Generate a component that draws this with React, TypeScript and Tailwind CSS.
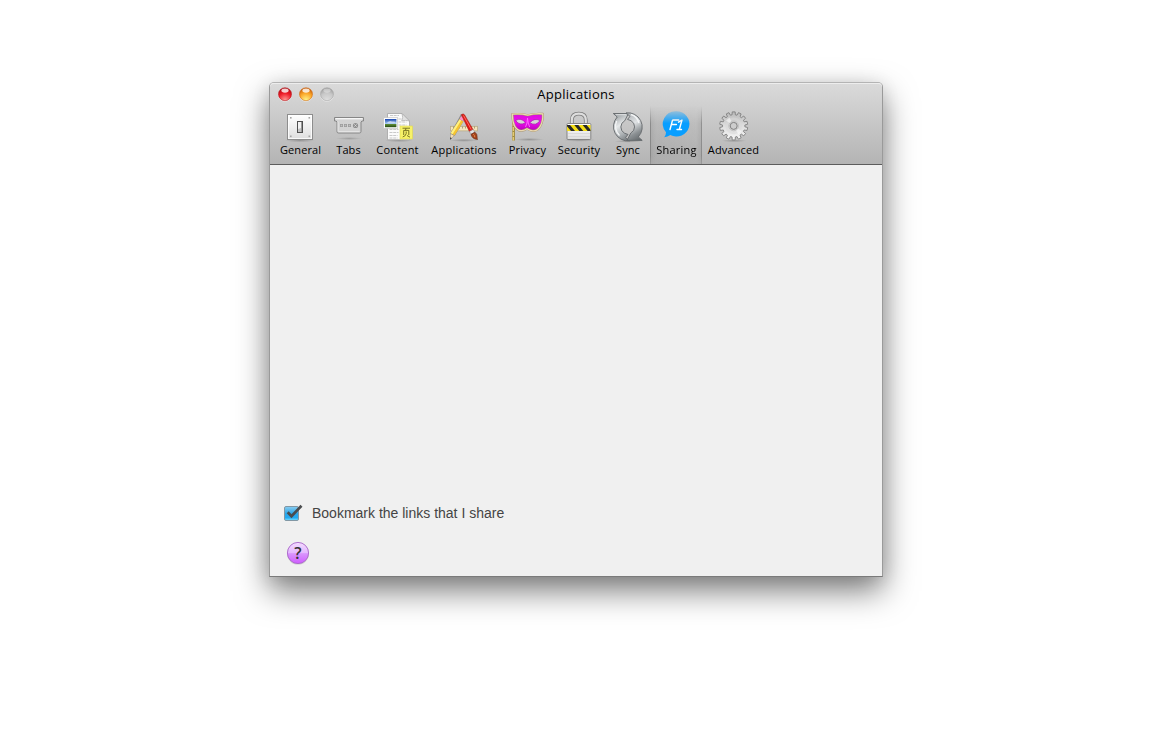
import type { ReactNode } from "react";

const polar = (cx: number, cy: number, r: number, deg: number) => {
  const a = (deg * Math.PI) / 180;
  return `${(cx + r * Math.cos(a)).toFixed(2)},${(cy + r * Math.sin(a)).toFixed(2)}`;
};

const gearPoints = Array.from({ length: 14 }, (_, i) => {
  const c = i * (360 / 14) - 90;
  return [
    polar(31.7, 16.9, 11.2, c - 8.5),
    polar(31.7, 16.9, 14.1, c - 6),
    polar(31.7, 16.9, 14.1, c + 6),
    polar(31.7, 16.9, 11.2, c + 8.5),
  ].join(" ");
}).join(" ");

function Gradients() {
  return (
    <svg width="0" height="0" className="absolute">
      <defs>
        <linearGradient id="plate" x1="0" y1="0" x2="0" y2="1">
          <stop offset="0" stopColor="#fff" />
          <stop offset="1" stopColor="#dedede" />
        </linearGradient>
        <linearGradient id="sky" x1="0" y1="0" x2="0" y2="1">
          <stop offset="0" stopColor="#1745b0" />
          <stop offset=".55" stopColor="#a5c9ee" />
          <stop offset=".65" stopColor="#5c8a34" />
          <stop offset="1" stopColor="#254a14" />
        </linearGradient>
        <linearGradient id="mask" x1="0" y1="0" x2="0" y2="1">
          <stop offset="0" stopColor="#d80fdc" />
          <stop offset=".5" stopColor="#f00cee" />
          <stop offset="1" stopColor="#b400b8" />
        </linearGradient>
        <linearGradient id="steel" gradientUnits="userSpaceOnUse" x1="8" y1="5" x2="24" y2="32">
          <stop offset="0" stopColor="#8d9295" />
          <stop offset=".4" stopColor="#e6e9ea" />
          <stop offset=".7" stopColor="#a9aeb1" />
          <stop offset="1" stopColor="#666b6e" />
        </linearGradient>
        <linearGradient id="steelDark" gradientUnits="userSpaceOnUse" x1="20" y1="4" x2="36" y2="32">
          <stop offset="0" stopColor="#a9adb0" />
          <stop offset=".4" stopColor="#dfe2e4" />
          <stop offset=".7" stopColor="#8b9093" />
          <stop offset="1" stopColor="#5b6063" />
        </linearGradient>
        <linearGradient id="gear" x1="0" y1="0" x2="0" y2="1">
          <stop offset="0" stopColor="#b8b8b8" />
          <stop offset=".5" stopColor="#dedede" />
          <stop offset="1" stopColor="#f6f6f6" />
        </linearGradient>
        <radialGradient id="ground">
          <stop offset="0" stopColor="#000" stopOpacity=".22" />
          <stop offset="1" stopColor="#000" stopOpacity="0" />
        </radialGradient>
        <clipPath id="lockBand">
          <rect x="15" y="16" width="23.500" height="6" />
        </clipPath>
      </defs>
    </svg>
  );
}

const GeneralIcon = () => (
  <>
    <ellipse cx="26" cy="31.500" rx="15" ry="1.800" fill="url(#ground)" />
    <rect x="13.500" y="5.500" width="25" height="25" fill="url(#plate)" stroke="#8d8d8d" />
    <rect x="14.500" y="6.500" width="23" height="23" fill="none" stroke="#fff" strokeOpacity=".8" />
    <g fill="#a5a5a5">
      <rect x="16" y="8" width="1.600" height="1.600" />
      <rect x="34.500" y="8" width="1.600" height="1.600" />
      <rect x="16" y="26.500" width="1.600" height="1.600" />
      <rect x="34.500" y="26.500" width="1.600" height="1.600" />
    </g>
    <rect x="23.500" y="12.500" width="5" height="11" fill="#f2f2f2" stroke="#4f4f4f" />
    <path d="M24 20l3-1v4h-3z" fill="#c5c5c5" />
    <path d="M27.500 13v10" stroke="#999" />
  </>
);

const TabsIcon = () => (
  <>
    <ellipse cx="22" cy="29.500" rx="13" ry="1.500" fill="url(#ground)" opacity=".8" />
    <path
      d="M7.500 8.500h29v3.500h-1.500l-1 1v9.500q0 1.500-1.500 1.500h-21q-1.500 0-1.500-1.500v-9.500l-1-1h-1.500z"
      fill="#d2d2d2"
      stroke="#868686"
    />
    <path d="M8.500 9.700h27" stroke="#f8f8f8" strokeWidth="1.300" />
    <path d="M11 12.500v10M11.500 22.700h21" stroke="#eee" strokeWidth=".8" />
    <g fill="#c0c0c0" stroke="#9c9c9c" strokeWidth=".8">
      <rect x="13.400" y="15.400" width="2.200" height="2.200" />
      <rect x="17.400" y="15.400" width="2.200" height="2.200" />
      <rect x="21.400" y="15.400" width="2.200" height="2.200" />
    </g>
    <circle cx="28.500" cy="16.500" r="2.600" fill="#8f8f8f" />
    <path d="M27.300 15.300l2.400 2.400M29.700 15.300l-2.400 2.400" stroke="#ddd" strokeWidth=".8" />
  </>
);

const ContentIcon = () => (
  <>
    <ellipse cx="29" cy="31.500" rx="14" ry="1.600" fill="url(#ground)" />
    <path d="M17.500 4.500h14.500l7.500 7.500v18.800h-22z" fill="#fbfbfb" stroke="#aaa" strokeWidth=".9" />
    <path d="M32 4.500q1.500 4.500-.3 7.300 4-1 7.800.2z" fill="#e2e2e2" stroke="#aaa" strokeWidth=".7" />
    <path
      d="M20 6.500h9M28.500 10h3M28.500 13h8M28.500 16h8M19.500 20.500h9M19.500 23.500h9M19.500 26.500h8M19.500 29h8"
      stroke="#c9c9c9"
      strokeDasharray="3 .7"
    />
    <rect x="13.700" y="8.700" width="14" height="10.800" fill="#fff" stroke="#c4c4c4" strokeWidth=".7" />
    <rect x="15" y="10" width="11.400" height="8.200" fill="url(#sky)" />
    <path d="M17 13.500q3-2.500 5-1 3-.5 4 1-2 1-4 .7-3 .5-5-.7" fill="#fff" opacity=".55" />
    <rect x="30" y="17" width="12.500" height="13" fill="#f7f268" stroke="#e0d84e" strokeWidth=".6" />
    <path
      d="M32.500 19.200h7.500M36 19.200l-.5 2M33.700 26v-4.600h5.100v4.600M36.200 22.500v2q-.3 2.500-3.500 3.500M37 26.500l3 1.700"
      fill="none"
      stroke="#6d681b"
      strokeWidth=".9"
    />
  </>
);

const ApplicationsIcon = () => (
  <>
    <ellipse cx="39" cy="31.300" rx="15" ry="1.600" fill="url(#ground)" />
    <rect x="25.500" y="17.300" width="27" height="4.600" fill="#f3e4bc" stroke="#b3a67f" strokeWidth=".7" />
    <path d="M28.500 17.500v2M31.500 17.500v2M34.500 17.500v2M37.500 17.500v2M40.500 17.500v2M43.500 17.500v2M46.500 17.500v2M49.500 17.500v2" stroke="#8d8263" strokeWidth=".7" />
    <path d="M36 4.900l3.600 1.700-1 5.400L30.300 26l-5.300 4.800.4-6.600 8.300-14.700z" fill="#8a8a8a" />
    <path d="M34.600 10.200l3.800 2.200-8.800 14-3.800-2.400z" fill="#f5c431" />
    <path d="M34.600 10.200l1.700 1-8.800 14-1.700-1.200z" fill="#fff281" />
    <path d="M35.600 7.900q2-1.700 3.800 1l-1.200 3.200-3.500-1.900z" fill="#ff93c8" />
    <path d="M25.800 25l3.200 1.800-3.600 3.100z" fill="#f6dfb4" />
    <path d="M25.300 28.300l1.500.9-1.800 1.600z" fill="#333" />
    <path d="M36.400 5.700q1.900-1.700 3.200.2l8.600 15-3.600 2z" fill="#e21713" stroke="#a5231f" strokeWidth=".6" />
    <path d="M38.500 6.500l7.800 14" stroke="#ff786a" strokeWidth=".9" />
    <path d="M44.400 22.500l3.800-2.100 1.600 2.800-3.700 2z" fill="#e4e4e4" stroke="#888" strokeWidth=".5" />
    <path d="M46 25.300l3.900-2.100q2.500 1.700 2.200 4.300-.1 1.800.4 3-5.600-.5-6.500-5.200z" fill="#a6431b" stroke="#632611" strokeWidth=".6" />
    <path d="M48.300 25.200q1.500 1 1.500 3" stroke="#e08b52" fill="none" />
  </>
);

const maskOutline =
  "M9.400 5.200q8.300-.8 15.300 1 8-2 15-1.300.6 6.500-2.100 11.700-2.800 5.500-7.700 5.300-2.400 0-5.900-2.200-3.200 2.200-6 2-4-.2-6.400-4.800-2.200-4.500-2.200-11.700z";

const PrivacyIcon = () => (
  <>
    <ellipse cx="26" cy="30.500" rx="15" ry="1.600" fill="url(#ground)" />
    <path d="M10.600 8v23.500" stroke="#a08a3a" strokeWidth="2.600" />
    <path d="M10.300 8v23.500" stroke="#ecd27a" strokeWidth="1.200" strokeDasharray="4 1" />
    <path d={maskOutline} fill="url(#mask)" stroke="#a5946f" strokeWidth="2.100" />
    <path d={maskOutline} fill="none" stroke="#ecd8b0" strokeWidth="1.200" />
    <path d="M22.500 18q2-3.500 2-9 .3 5.500 2.200 9" stroke="#ff6cff" strokeWidth=".9" fill="none" />
    <path d="M12.600 11.500q5.500-3.300 9.900 2.200-5.800 3.600-9.900-2.200zM26.700 13.700q5-5.200 10.300-2.100-4 6-10.300 2.100z" fill="#d6d4d6" stroke="#a518ab" strokeWidth=".7" />
  </>
);

const SecurityIcon = () => (
  <>
    <ellipse cx="27.500" cy="31" rx="16" ry="1.800" fill="url(#ground)" />
    <path d="M19.800 15v-3.800q0-6.500 7-6.500t7 6.500V15" fill="none" stroke="#7c7c7c" strokeWidth="3.800" />
    <path d="M19.800 15v-3.800q0-6.500 7-6.500t7 6.500V15" fill="none" stroke="#dedede" strokeWidth="2.200" />
    <rect x="15" y="14.500" width="23.800" height="16" rx="1" fill="url(#plate)" stroke="#7c7c7c" strokeWidth=".9" />
    <rect x="15" y="16" width="23.500" height="6" fill="#f5df16" />
    <g clipPath="url(#lockBand)" fill="#292927">
      <path d="M14 16h4l5 6h-4zM22.300 16h4l5 6h-4zM30.600 16h4l5 6h-4z" />
    </g>
    <path d="M16 24.500h22M16 27.500h22" stroke="#d2d2d2" strokeWidth=".7" />
  </>
);

const SyncIcon = () => (
  <>
    <ellipse cx="22" cy="32.300" rx="14" ry="1.400" fill="url(#ground)" />
    <path
      d="M7.300 4.500H22.500L18.700 11.800A7 7 0 0 0 18.500 24.200L22 25.500 19.500 28.500 23.500 31.800A14.300 14.300 0 0 1 11.200 8z"
      fill="url(#steel)"
      stroke="#63686b"
      strokeWidth=".9"
      strokeLinejoin="round"
    />
    <path
      d="M36.200 31.400H21L24.800 24A7 7 0 0 0 25 11.700L21.500 10.400 24 7.400 20 3.900A14.300 14.300 0 0 1 32.300 27.900z"
      fill="url(#steelDark)"
      stroke="#63686b"
      strokeWidth=".9"
      strokeLinejoin="round"
    />
    <path d="M10.700 12A12.500 12.500 0 0 0 13.500 26.500M25 5.500Q31 7 33 14" stroke="#f4f6f7" strokeWidth="1.300" fill="none" />
    <path d="M9.500 5.700H20" stroke="#e6e9ea" strokeWidth=".9" />
  </>
);

const SharingIcon = () => (
  <>
    <path d="M26.500 2.200a13 12.700 0 1 1-6.200 23.900Q17.500 28 14.300 28.200q1.700-2 1.700-5A13 12.700 0 0 1 26.500 2.200z" fill="#089eff" />
    <path
      d="M22.500 11.300L20 20.500M23 11h5.700M21.600 15.500h4.800M28.500 13.200l3.500-2.200-2.700 9.500M27 20.500h4.500"
      stroke="#fff"
      strokeWidth="1.400"
      strokeLinecap="round"
      strokeLinejoin="round"
      fill="none"
    />
  </>
);

const AdvancedIcon = () => (
  <>
    <ellipse cx="32" cy="31.800" rx="13" ry="1.300" fill="url(#ground)" />
    <polygon points={gearPoints} fill="url(#gear)" stroke="#808080" strokeWidth=".9" strokeLinejoin="round" />
    <circle cx="31.700" cy="16.900" r="8.300" fill="#d8d8d8" opacity=".5" />
    <path d="M31.700 16.900L24 11.500 27.500 8.500zM31.700 16.900l8 5-3.300 3.500z" fill="#fff" opacity=".5" />
    <circle cx="31.700" cy="16.900" r="4.900" fill="#d6d6d6" stroke="#bcbcbc" strokeWidth=".8" />
    <circle cx="31.700" cy="16.900" r="3.500" fill="#cdcdcd" stroke="#808080" strokeWidth="1" />
  </>
);

type Tool = { label: string; width: number; box: string; text: string; icon: ReactNode; active?: boolean };

const tools: Tool[] = [
  { label: "General", width: 53, box: "w-[53px]", text: "tracking-[0.1px]", icon: <GeneralIcon /> },
  { label: "Tabs", width: 43, box: "w-[43px]", text: "tracking-[0.1px]", icon: <TabsIcon /> },
  { label: "Content", width: 55, box: "w-[55px]", text: "tracking-[0.2px]", icon: <ContentIcon /> },
  { label: "Applications", width: 78, box: "w-[78px]", text: "tracking-[0.22px]", icon: <ApplicationsIcon /> },
  { label: "Privacy", width: 49, box: "w-[49px]", text: "tracking-[0.15px]", icon: <PrivacyIcon /> },
  { label: "Security", width: 54, box: "w-[54px]", text: "tracking-[0.2px]", icon: <SecurityIcon /> },
  { label: "Sync", width: 44, box: "w-[44px]", text: "tracking-[0.1px]", icon: <SyncIcon /> },
  { label: "Sharing", width: 52, box: "w-[52px]", text: "pl-px tracking-[0.25px]", icon: <SharingIcon />, active: true },
  { label: "Advanced", width: 63, box: "w-[63px]", text: "tracking-[0.15px]", icon: <AdvancedIcon /> },
];

function TrafficLight({ tone }: { tone: "red" | "amber" | "off" }) {
  const palette = {
    red: ["#b00d14", "#ee1c28", "#ff9c96"],
    amber: ["#c8600c", "#fba527", "#fff58a"],
    off: ["#a0a0a0", "#c8c8c8", "#dedede"],
  }[tone];
  return (
    <svg width="14" height="15" viewBox="0 0 14 15">
      <defs>
        <radialGradient id={`light-${tone}`} cx=".5" cy=".95" r=".9">
          <stop offset="0" stopColor={palette[2]} />
          <stop offset=".6" stopColor={palette[1]} />
          <stop offset="1" stopColor={palette[0]} />
        </radialGradient>
      </defs>
      <circle cx="7" cy="7.900" r="6.800" fill="#fff" opacity=".5" />
      <circle cx="7" cy="7.200" r="6.500" fill={`url(#light-${tone})`} stroke={palette[0]} strokeOpacity=".65" strokeWidth=".8" />
      <ellipse cx="7" cy="3.600" rx="3.600" ry="2.100" fill="#fff" opacity={tone === "off" ? 0.35 : 0.8} />
    </svg>
  );
}

export default function App() {
  return (
    <div className="flex h-[733px] w-full items-start overflow-hidden bg-white pt-[82px] pl-[269px] font-['Open_Sans','Noto_Sans',sans-serif] text-black">
      <Gradients />
      <main className="flex h-[495px] w-[614px] flex-col rounded-t-[5px] border border-t-[#b4b4b4] border-r-[#9a9a9a] border-b-[#7a7a7a] border-l-[#9a9a9a] bg-[#f0f0f0] shadow-[0_14px_32px_rgba(0,0,0,0.5),0_3px_18px_rgba(0,0,0,0.1)]">
        <header className="flex h-[82px] shrink-0 flex-col rounded-t-[4px] border-t border-b border-t-[#ededed] border-b-[#5c5c5c] bg-linear-to-b from-[#dadada] to-[#b4b4b4]">
          <div className="grid h-[22px] shrink-0 grid-cols-[70px_1fr_70px] items-start">
            <div className="flex gap-[7px] pt-[3px] pl-[8px]">
              <TrafficLight tone="red" />
              <TrafficLight tone="amber" />
              <TrafficLight tone="off" />
            </div>
            <h1 className="pt-[1px] text-center text-[13px] leading-[19px] tracking-[0.3px]">Applications</h1>
          </div>
          <nav className="flex h-[58px] pl-[4px]">
            {tools.map((t) => (
              <button
                key={t.label}
                className={`flex h-full shrink-0 flex-col items-center pt-[3px] ${t.box} ${
                  t.active
                    ? "bg-[linear-gradient(to_right,#707070b0_0_1px,#80808055_1px,#80808030_6px,#80808020_46px,#80808045_51px,#707070a0_51px)] [mask-image:linear-gradient(to_bottom,transparent,#000_30%,#000_85%,#0009)]"
                    : ""
                }`}
              >
                <svg width={t.width} height="34" viewBox={`0 0 ${t.width} 34`} className="shrink-0">
                  {t.icon}
                </svg>
                <span className={`-mt-px text-[11px] leading-[16px] whitespace-nowrap ${t.text}`}>{t.label}</span>
              </button>
            ))}
          </nav>
        </header>
        <section className="flex grow flex-col justify-end pb-[11px] pl-[14px]">
          <label className="flex h-[20px] items-center gap-[9px] font-['Liberation_Sans',Arial,sans-serif] text-[14px] leading-[20px] text-[#444]">
            <svg width="19" height="20" viewBox="0 0 19 20">
              <defs>
                <linearGradient id="check" x1="0" y1="0" x2="0" y2="1">
                  <stop offset="0" stopColor="#8ccdf0" />
                  <stop offset=".5" stopColor="#2ba6e8" />
                  <stop offset=".8" stopColor="#21a9f2" />
                  <stop offset="1" stopColor="#7fe0fb" />
                </linearGradient>
              </defs>
              <rect x=".5" y="3.500" width="14" height="14" rx="1.500" fill="url(#check)" stroke="#8297a4" />
              <path d="M3.700 9.300L7.500 13.300 17.500 2.700" stroke="#4a4c4f" strokeWidth="2.700" fill="none" />
            </svg>
            Bookmark the links that I share
          </label>
          <button className="mt-[18px] ml-[2px] h-[24px] w-[24px]">
            <svg width="24" height="24" viewBox="0 0 24 24">
              <defs>
                <linearGradient id="help" x1="0" y1="0" x2="0" y2="1">
                  <stop offset="0" stopColor="#f3dcff" />
                  <stop offset=".48" stopColor="#e5b8ff" />
                  <stop offset=".53" stopColor="#d995fd" />
                  <stop offset="1" stopColor="#cf5cff" />
                </linearGradient>
              </defs>
              <circle cx="12" cy="12.600" r="11" fill="#000" opacity=".15" />
              <circle cx="12" cy="12" r="10.600" fill="url(#help)" stroke="#a967cb" strokeWidth=".9" />
              <text x="12" y="17.700" textAnchor="middle" fontSize="16" fontWeight="600" fill="#333" className="font-['Open_Sans',sans-serif]">
                ?
              </text>
            </svg>
          </button>
        </section>
      </main>
    </div>
  );
}
